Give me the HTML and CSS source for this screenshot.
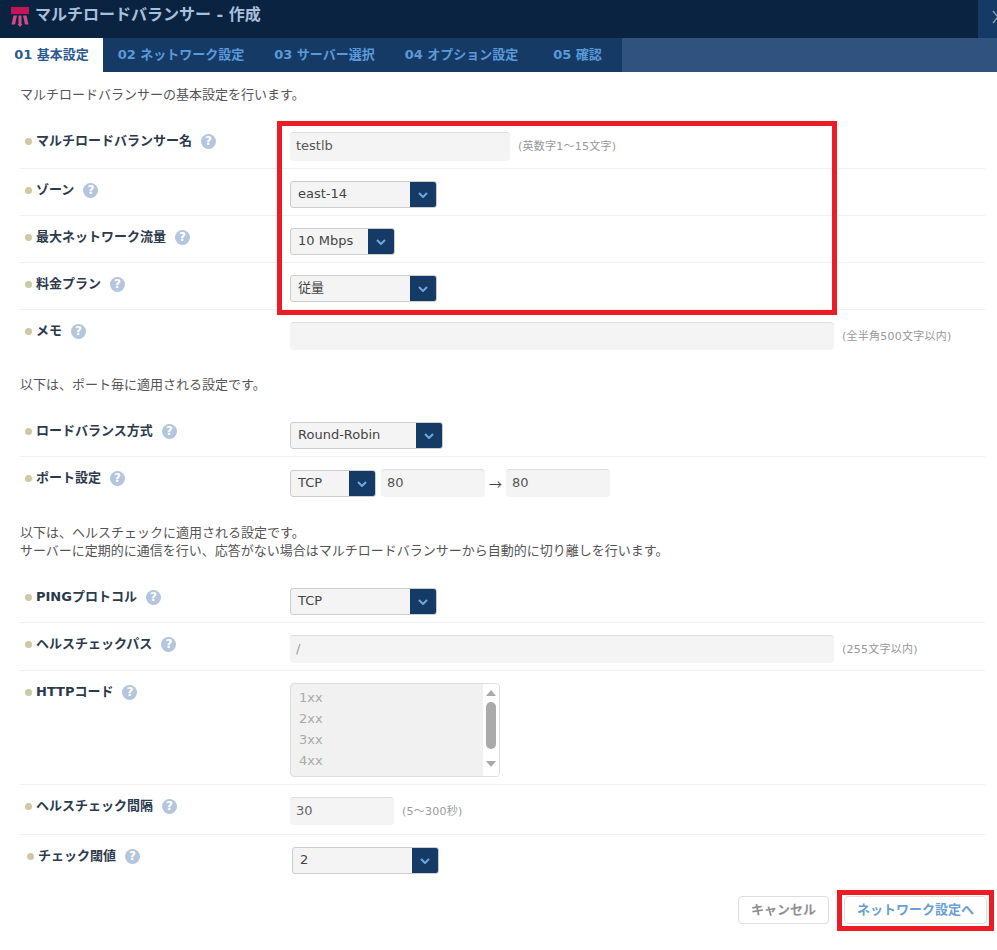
FILE: index.html
```html
<!DOCTYPE html>
<html lang="ja">
<head>
<meta charset="utf-8">
<title>マルチロードバランサー - 作成</title>
<link rel="stylesheet" href="styles.css">
</head>
<body>
<svg class="defs" width="0" height="0" aria-hidden="true">
  <symbol id="chev" viewBox="0 0 10 6"><path d="M1 1l4 4 4-4" fill="none" stroke="#6fa8dc" stroke-width="2"/></symbol>
</svg>
<header class="head">
  <svg class="logo" width="18" height="20" viewBox="0 0 18 20"><path d="M0 0h18v7H0z" fill="#c4145a"/><path d="M2.500 8.500h3.500L4 17.500H.5zM7.500 8.500h3V17h1l-2.500 3-2.500-3h1zM12 8.500h3.500l2 9h-3.500z" fill="#cf4d87"/></svg>
  <h1 class="title">マルチロードバランサー - 作成</h1>
  <div class="close"><svg width="12" height="14" viewBox="0 0 12 14"><path d="M1 1l10 12M11 1L1 13" stroke="#8a9bb0" stroke-width="1.5" fill="none"/></svg></div>
</header>
<nav class="tabs">
  <span class="tab active t1">01 基本設定</span>
  <span class="tab t2">02 ネットワーク設定</span>
  <span class="tab t3">03 サーバー選択</span>
  <span class="tab t4">04 オプション設定</span>
  <span class="tab t5">05 確認</span>
</nav>
<main class="body">
  <p class="intro first">マルチロードバランサーの基本設定を行います。</p>
  <section class="rows r1">
    <div class="row tall"><div class="label">マルチロードバランサー名<i class="q">?</i></div><div class="ctl"><input class="inp w220" value="testlb"><span class="hint">(英数字1～15文字)</span></div></div>
    <div class="row"><div class="label">ゾーン<i class="q">?</i></div><div class="ctl"><div class="sel w147"><span>east-14</span><b><svg width="10" height="6"><use href="#chev"/></svg></b></div></div></div>
    <div class="row"><div class="label">最大ネットワーク流量<i class="q">?</i></div><div class="ctl"><div class="sel w105"><span>10 Mbps</span><b><svg width="10" height="6"><use href="#chev"/></svg></b></div></div></div>
    <div class="row"><div class="label">料金プラン<i class="q">?</i></div><div class="ctl"><div class="sel w147"><span>従量</span><b><svg width="10" height="6"><use href="#chev"/></svg></b></div></div></div>
    <div class="row tall last"><div class="label">メモ<i class="q">?</i></div><div class="ctl"><input class="inp w544"><span class="hint">(全半角500文字以内)</span></div></div>
  </section>
  <p class="intro second">以下は、ポート毎に適用される設定です。</p>
  <section class="rows r2">
    <div class="row"><div class="label">ロードバランス方式<i class="q">?</i></div><div class="ctl"><div class="sel w153"><span>Round-Robin</span><b><svg width="10" height="6"><use href="#chev"/></svg></b></div></div></div>
    <div class="row last"><div class="label">ポート設定<i class="q">?</i></div><div class="ctl port"><div class="sel w86"><span>TCP</span><b><svg width="10" height="6"><use href="#chev"/></svg></b></div><input class="inp w104" value="80"><span class="arrow">→</span><input class="inp w104" value="80"></div></div>
  </section>
  <p class="intro third">以下は、ヘルスチェックに適用される設定です。<br>サーバーに定期的に通信を行い、応答がない場合はマルチロードバランサーから自動的に切り離しを行います。</p>
  <section class="rows r3">
    <div class="row"><div class="label">PINGプロトコル<i class="q">?</i></div><div class="ctl"><div class="sel w147"><span>TCP</span><b><svg width="10" height="6"><use href="#chev"/></svg></b></div></div></div>
    <div class="row tall"><div class="label">ヘルスチェックパス<i class="q">?</i></div><div class="ctl"><input class="inp w544 muted" value="/"><span class="hint">(255文字以内)</span></div></div>
    <div class="row"><div class="label">HTTPコード<i class="q">?</i></div><div class="ctl">
      <div class="list">
        <ul class="opts"><li>1xx</li><li>2xx</li><li>3xx</li><li>4xx</li></ul>
        <div class="bar"><i class="up"></i><i class="thumb"></i><i class="down"></i></div>
      </div></div></div>
    <div class="row tall gap"><div class="label">ヘルスチェック間隔<i class="q">?</i></div><div class="ctl"><input class="inp w104 plain" value="30"><span class="hint">(5～300秒)</span></div></div>
    <div class="row last shift"><div class="label">チェック閾値<i class="q">?</i></div><div class="ctl"><div class="sel w147"><span>2</span><b><svg width="10" height="6"><use href="#chev"/></svg></b></div></div></div>
  </section>
  <footer class="actions"><button class="btn cancel">キャンセル</button><button class="btn next">ネットワーク設定へ</button></footer>
</main>
<div class="mark m1"></div>
<div class="mark m2"></div>
</body>
</html>
```
FILE: styles.css
```css
* { box-sizing: border-box; }
html, body { margin: 0; padding: 0; }
body {
  width: 997px; height: 950px; overflow: hidden; position: relative; background: #fff;
  font-family: "DejaVu Sans", "Noto Sans CJK JP", sans-serif;
  font-size: 13px; color: #444;
}
.defs { position: absolute; }
.head { height: 38px; background: #0a2340; display: flex; align-items: center; padding-left: 11px; }
.logo { margin-right: 6px; margin-bottom: 4px; }
.title { flex: 1; margin: 0; font-size: 16px; font-weight: 700; color: #a9c0dd; line-height: 30px; padding-bottom: 8px; }
.close { width: 19px; height: 38px; background: #153a66; padding: 10px 0 0 14px; overflow: hidden; flex: none; }
.close svg { display: block; }
.tabs { height: 34px; background: #30527f; display: flex; }
.tab { height: 34px; line-height: 33px; background: #153a66; color: #5b9ad8; font-weight: 700; font-size: 13px; text-align: center; flex: none; }
.tab.active { background: #fff; color: #2c5a8c; }
.t1 { width: 103px; } .t2 { width: 156px; } .t3 { width: 131px; } .t4 { width: 143px; } .t5 { width: 89px; }
.body { padding: 0 12px 0 20px; }
.intro { margin: 0; line-height: 18px; color: #555; font-size: 13px; }
.first { padding-top: 14px; }
.second { padding-top: 19px; }
.third { padding-top: 20px; }
.r1 { margin-top: 18px; }
.r2 { margin-top: 16px; }
.r3 { margin-top: 16px; }
.row { display: flex; border-bottom: 1px solid #eef1f4; padding: 12px 0 7px; }
.row.gap { padding-bottom: 9px; }
.row.last { border-bottom: 0; }
.r1 .row:first-child { padding-top: 10px; }
.label {
  width: 270px; flex: none; position: relative; padding: 0 0 0 16px;
  font-weight: 700; color: #2b3a4d; font-size: 13px; line-height: 18px;
  display: flex; align-items: center; height: 18px;
}
.label::before { content: ""; position: absolute; left: 5px; top: 6px; width: 7px; height: 7px; border-radius: 50%; background: #cfc9a3; }
.q { display: inline-block; width: 15px; height: 15px; border-radius: 50%; background: #b3c6dd; color: #fff; font-style: normal; font-size: 12px; line-height: 15px; text-align: center; margin-left: 9px; }
.ctl { display: flex; align-items: center; min-width: 0; }
.inp { height: 28px; border: 0; border-top: 1px solid #ddd; border-radius: 4px; background: #f4f4f4; font: inherit; color: #555; padding: 0 6px 3px; outline: 0; display: block; }
.muted { color: #999; }
.plain { color: #666; }
.w220 { width: 220px; height: 29px; }
.w544 { width: 544px; }
.w104 { width: 104px; }
.hint { font-size: 11px; color: #999; margin: 0 0 3px 8px; letter-spacing: .25px; }
.sel { height: 27px; display: flex; border: 1px solid #ccc; border-radius: 3px; background: #f4f4f4; overflow: hidden; color: #444; line-height: 23px; }
.sel span { flex: 1; padding-left: 7px; }
.sel b { width: 26px; background: #153a66; display: flex; align-items: center; justify-content: center; flex: none; }
.w147 { width: 147px; } .w105 { width: 105px; } .w153 { width: 153px; } .w86 { width: 86px; }
.port { align-items: flex-end; }
.port .w104 { margin-left: 5px; }
.arrow { width: 21px; text-align: center; color: #444; line-height: 26px; font-family: "Noto Sans CJK JP", sans-serif; }
.port .arrow + .w104 { margin-left: 0; }
.list { width: 210px; height: 94px; border: 1px solid #ddd; border-radius: 4px; display: flex; background: #f1f1f1; overflow: hidden; }
.opts { flex: 1; list-style: none; margin: 0; padding: 3px 0 0 8px; color: #aaa; line-height: 21px; }
.bar { width: 16px; background: #fff; position: relative; display: flex; flex-direction: column; align-items: center; }
.up { border: 5px solid transparent; border-top: 0; border-bottom: 6px solid #aaa; margin-top: 6px; }
.thumb { width: 10px; height: 47px; border-radius: 5px; background: #aaa; margin-top: 6px; }
.down { border: 5px solid transparent; border-bottom: 0; border-top: 6px solid #aaa; margin-top: 12px; }
.shift { padding-left: 2px; }
.actions { display: flex; justify-content: flex-end; gap: 15px; margin: 15px -2px 0 0; }
.btn { height: 28px; border: 1px solid #ddd; border-radius: 4px; background: #fff; font: inherit; font-weight: 700; padding: 0 0 3px; }
.cancel { width: 91px; color: #8f8f8f; }
.next { width: 143px; color: #6a9fd4; }
.mark { position: absolute; border: 5px solid #ed1c24; pointer-events: none; }
.m1 { left: 277px; top: 121px; width: 560px; height: 194px; }
.m2 { left: 837px; top: 890px; width: 157px; height: 41px; }
```
